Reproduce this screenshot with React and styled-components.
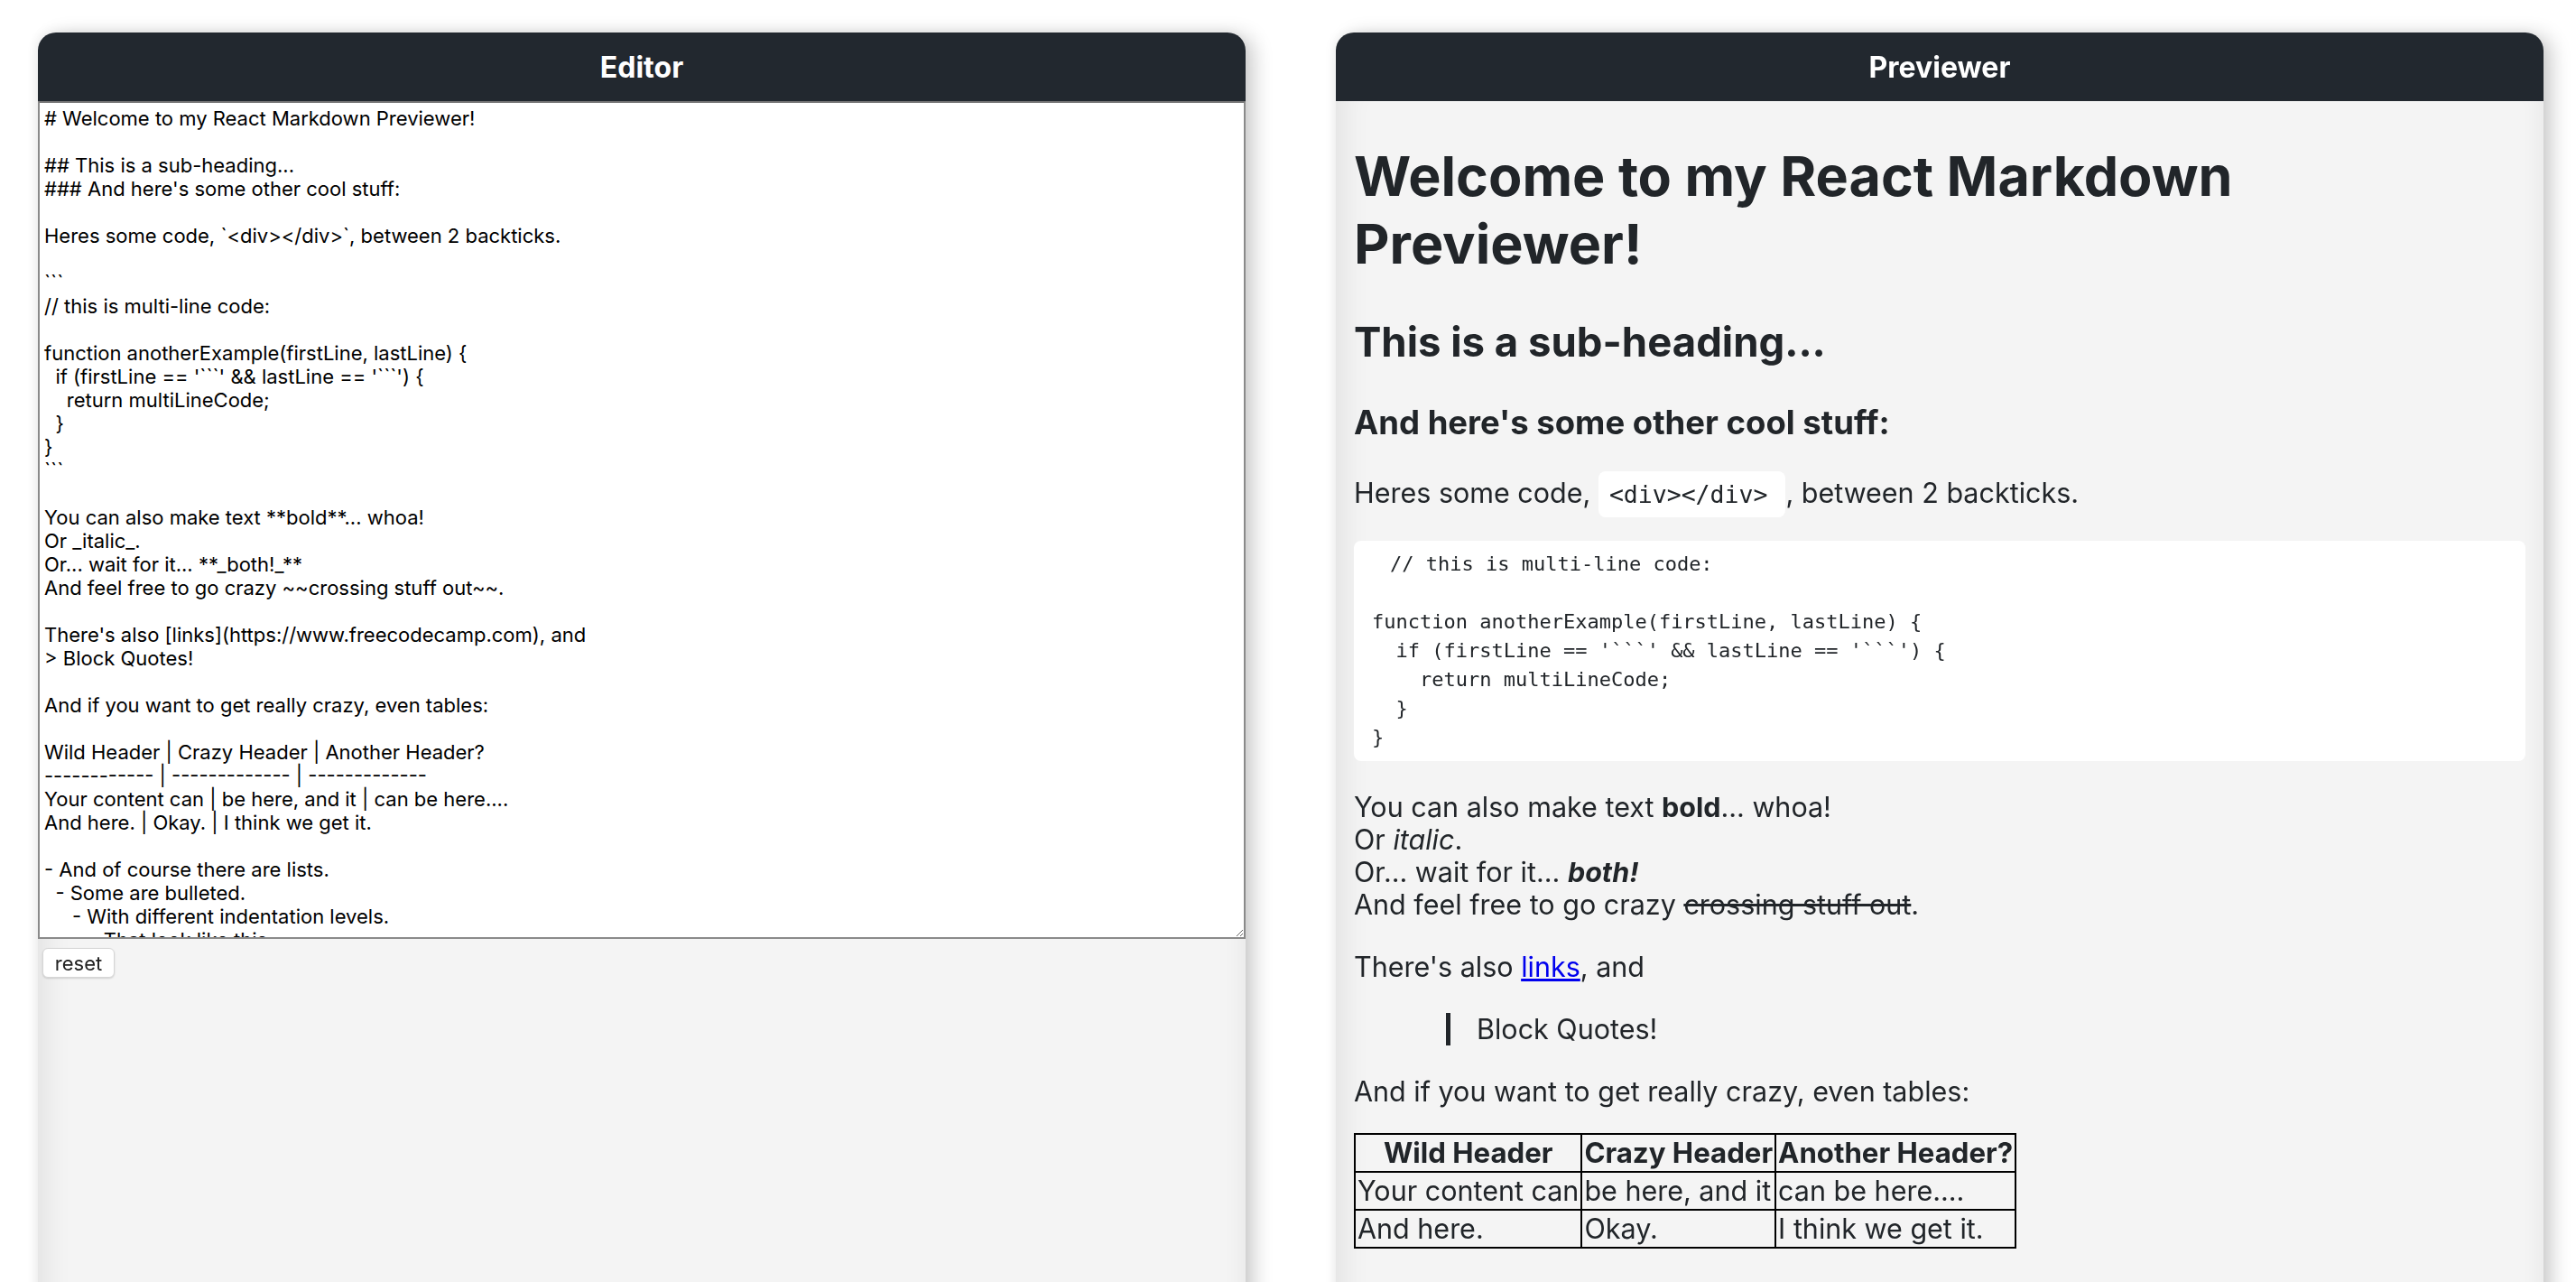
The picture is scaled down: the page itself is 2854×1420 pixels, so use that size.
import React, { useState } from 'react';
import styled, { createGlobalStyle } from 'styled-components';

const defaultMarkdown = `# Welcome to my React Markdown Previewer!

## This is a sub-heading...
### And here's some other cool stuff:

Heres some code, \`<div></div>\`, between 2 backticks.

\`\`\`
// this is multi-line code:

function anotherExample(firstLine, lastLine) {
  if (firstLine == '\`\`\`' && lastLine == '\`\`\`') {
    return multiLineCode;
  }
}
\`\`\`

You can also make text **bold**... whoa!
Or _italic_.
Or... wait for it... **_both!_**
And feel free to go crazy ~~crossing stuff out~~.

There's also [links](https://www.freecodecamp.com), and
> Block Quotes!

And if you want to get really crazy, even tables:

Wild Header | Crazy Header | Another Header?
------------ | ------------- | -------------
Your content can | be here, and it | can be here....
And here. | Okay. | I think we get it.

- And of course there are lists.
  - Some are bulleted.
     - With different indentation levels.
        - That look like this.


1. And there are numbered lists too.
1. Use just 1s if you want!
1. And last but not least, let's not forget embedded images:

![React Logo w/ Text](https://goo.gl/Umyytc)
`;

const GlobalStyle = createGlobalStyle`
    body{
        margin:0;
        background:#fff;
        font-family: Inter, "Noto Sans", sans-serif;
    }
`;

const Page = styled.div`
    display:flex;
    align-items:stretch;
    gap:100px;
    padding:36px 36px 0 42px;
    min-height:100vh;
    box-sizing:border-box;
`;

const Panel = styled.section`
    flex:1;
    display:flex;
    flex-direction:column;
    background:#f4f4f4;
    border-radius:20px 20px 0 0;
    box-shadow: 10px 2px 22px -2px rgba(0,0,0,0.22), -3px -2px 12px rgba(0,0,0,0.05);
`;

const Header = styled.header`
    height:76px;
    display:flex;
    align-items:center;
    justify-content:center;
    background:#22282f;
    color:#fff;
    font-size:32px;
    font-weight:700;
    border-radius:20px 20px 0 0;
`;

const Body = styled.div`
    flex:1;
    box-shadow: inset 34px 0 30px -24px rgba(0,0,0,0.07), inset -24px 0 24px -20px rgba(0,0,0,0.05);
`;

const EditorArea = styled.textarea`
    display:block;
    width:100%;
    height:928px;
    box-sizing:border-box;
    margin:0;
    padding:4px 5px;
    border:2px solid #8a8a8a;
    border-top-color:#777;
    background:#fff;
    color:#000;
    font-family: Inter, "Noto Sans", sans-serif;
    font-size:22px;
    line-height:26px;
    outline:none;
    ::-webkit-scrollbar {
        width: 0px;
    }
`;

const ResetButton = styled.button`
    margin:10px 0 0 5px;
    width:80px;
    height:33px;
    padding:0;
    background:#fff;
    border:1px solid #d6d6d6;
    border-radius:6px;
    box-shadow:0 1px 2px rgba(0,0,0,0.15);
    color:#222;
    font-family: Inter, "Noto Sans", sans-serif;
    font-size:22px;
    cursor:pointer;
`;

const Preview = styled.div`
    padding:20px 20px 40px;
    color:#212529;
    font-size:30.5px;
    line-height:36px;

    h1{
        margin:26px 0 42px;
        padding-right:40px;
        font-size:61px;
        line-height:75px;
        font-weight:700;
    }
    h2{
        margin:0 0 38px;
        font-size:45.5px;
        line-height:58px;
        font-weight:700;
    }
    h3{
        margin:0 0 38px;
        font-size:36.5px;
        line-height:44px;
        font-weight:700;
    }
    p{
        margin:0 0 33px;
    }
    a{
        color:#0000ee;
        text-decoration:underline;
    }
    del{
        text-decoration:line-through;
    }
    ul, ol{
        margin:0 0 33px;
        padding-left:60px;
    }
`;

const InlineCode = styled.code`
    padding:10px 20px 10px 12px;
    background:#fff;
    border-radius:8px;
    font-family: "DejaVu Sans Mono", monospace;
    font-size:26.5px;
`;

const CodeBlock = styled.pre`
    margin:0 0 33px;
    padding:10px 20px;
    background:#fff;
    border-radius:8px;
    font-family: "DejaVu Sans Mono", monospace;
    font-size:22px;
    line-height:32px;
    text-indent:20px;
    white-space:pre;
`;

const Quote = styled.blockquote`
    margin:0 0 33px 102px;
    padding-left:29px;
    border-left:5px solid #212529;
`;

const Table = styled.table`
    border-collapse:collapse;
    margin:-5px 0 52px;

    th, td{
        border:2px solid #000;
        padding:2px;
    }
    th{
        font-size:31.2px;
        font-weight:700;
        text-align:center;
    }
    td{
        text-align:left;
    }
`;

const codeSample = `// this is multi-line code:

function anotherExample(firstLine, lastLine) {
  if (firstLine == '\`\`\`' && lastLine == '\`\`\`') {
    return multiLineCode;
  }
}`;

const tableHead = ['Wild Header', 'Crazy Header', 'Another Header?'];
const tableRows = [
    ['Your content can', 'be here, and it', 'can be here....'],
    ['And here.', 'Okay.', 'I think we get it.'],
];

const Previewer = () => (
    <Preview>
        <h1>Welcome to my React Markdown Previewer!</h1>
        <h2>This is a sub-heading...</h2>
        <h3>And here's some other cool stuff:</h3>
        <p>Heres some code, <InlineCode>{'<div></div>'}</InlineCode>, between 2 backticks.</p>
        <CodeBlock>{codeSample}</CodeBlock>
        <p>
            You can also make text <strong>bold</strong>... whoa!<br />
            Or <em>italic</em>.<br />
            Or... wait for it... <strong><em>both!</em></strong><br />
            And feel free to go crazy <del>crossing stuff out</del>.
        </p>
        <p>There's also <a href="#links">links</a>, and</p>
        <Quote>Block Quotes!</Quote>
        <p>And if you want to get really crazy, even tables:</p>
        <Table>
            <thead>
                <tr>{tableHead.map(h => <th key={h}>{h}</th>)}</tr>
            </thead>
            <tbody>
                {tableRows.map((row, i) => (
                    <tr key={i}>{row.map(c => <td key={c}>{c}</td>)}</tr>
                ))}
            </tbody>
        </Table>
        <ul>
            <li>And of course there are lists.
                <ul>
                    <li>Some are bulleted.
                        <ul>
                            <li>With different indentation levels.
                                <ul><li>That look like this.</li></ul>
                            </li>
                        </ul>
                    </li>
                </ul>
            </li>
        </ul>
        <ol>
            <li>And there are numbered lists too.</li>
            <li>Use just 1s if you want!</li>
            <li>And last but not least, let's not forget embedded images:</li>
        </ol>
    </Preview>
);

const App = () => {
    const [text, setText] = useState(defaultMarkdown);
    return (
        <>
            <GlobalStyle />
            <Page>
                <Panel>
                    <Header>Editor</Header>
                    <Body>
                        <EditorArea value={text} onChange={e => setText(e.target.value)} spellCheck={false} />
                        <ResetButton onClick={() => setText(defaultMarkdown)}>reset</ResetButton>
                    </Body>
                </Panel>
                <Panel>
                    <Header>Previewer</Header>
                    <Body>
                        <Previewer />
                    </Body>
                </Panel>
            </Page>
        </>
    );
};

export default App;
